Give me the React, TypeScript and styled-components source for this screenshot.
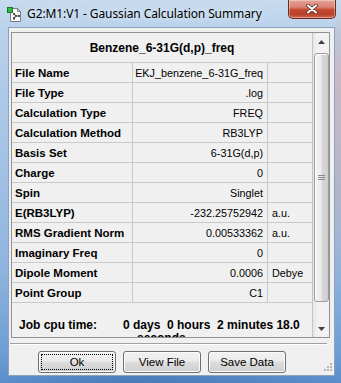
import React from "react";
import styled, { createGlobalStyle } from "styled-components";

const GlobalStyle = createGlobalStyle`
  html, body { margin: 0; padding: 0; }
  body { width: 341px; height: 383px; overflow: hidden; background: #9dbde2; }
  * { box-sizing: border-box; }
`;

const Window = styled.div`
  width: 341px;
  height: 383px;
  display: flex;
  flex-direction: column;
  padding: 0 6px 7px 8px;
  background:
    linear-gradient(180deg, rgba(205,180,185,0) 0%, rgba(205,180,185,0.75) 20%, rgba(190,175,185,0.6) 50%, rgba(190,175,185,0) 75%) right top / 6px 100% no-repeat,
    linear-gradient(90deg, rgba(40,90,160,0) 0%, rgba(40,90,160,0.35) 40%, rgba(40,90,160,0) 100%) left bottom / 100% 7px no-repeat,
    linear-gradient(180deg, #c7dbef 0%, #b9d1eb 8%, #a5c3e5 40%, #8fb4df 70%, #6e9ed4 92%, #5a8dca 100%);
`;

const TitleBar = styled.div`
  height: 27px;
  display: flex;
  align-items: flex-start;
`;

const AppIcon = styled.svg`
  margin: 7px 0 0 -1px;
  flex: none;
`;

const TitleText = styled.div`
  margin-left: 4px;
  line-height: 27px;
  font-family: "Noto Sans", "Liberation Sans", sans-serif;
  font-size: 12px;
  color: #000;
  letter-spacing: -0.1px;
  text-shadow: 0 0 6px rgba(255,255,255,0.9);
`;

const CloseButton = styled.div`
  margin-left: auto;
  margin-right: -1px;
  width: 48px;
  height: 19px;
  border: 1px solid #6e2a20;
  border-top: none;
  border-radius: 0 0 5px 5px;
  background: linear-gradient(180deg, #e6a396 0%, #d98270 40%, #c4472f 55%, #b8402c 80%, #cf6a4e 100%);
  box-shadow: inset 0 0 0 1px rgba(255,255,255,0.35);
  display: flex;
  align-items: center;
  justify-content: center;
`;

const Client = styled.div`
  flex: 1;
  background: #f0f0f0;
  border: 1px solid #8ea3bb;
  display: flex;
  flex-direction: column;
  min-height: 0;
`;

const Panel = styled.div`
  margin: 4px 4px 0 2px;
  height: 306px;
  border: 1px solid #8e9196;
  display: flex;
  overflow: hidden;
`;

const Content = styled.div`
  width: 300px;
  flex: none;
  overflow: hidden;
  font-family: "Liberation Sans", Arial, sans-serif;
  color: #000;
`;

const Header = styled.div`
  height: 30px;
  border-bottom: 1px solid #c9c9c9;
  display: flex;
  align-items: center;
  justify-content: center;
  font-weight: bold;
  font-size: 12px;
  padding-top: 1px;
`;

const Grid = styled.div`
  display: grid;
  grid-template-columns: 121px 135px 44px;
  grid-auto-rows: 20px;
`;

const Cell = styled.div<{ $kind: "label" | "value" | "unit" }>`
  display: flex;
  align-items: center;
  border-bottom: 1px solid #c9c9c9;
  border-right: ${(p) => (p.$kind === "unit" ? "none" : "1px solid #c9c9c9")};
  white-space: nowrap;
  overflow: hidden;
  font-size: ${(p) => (p.$kind === "label" ? "11.5px" : "10.8px")};
  font-weight: ${(p) => (p.$kind === "label" ? "bold" : "normal")};
  justify-content: ${(p) => (p.$kind === "value" ? "flex-end" : "flex-start")};
  padding: ${(p) => (p.$kind === "label" ? "0 0 0 3px" : p.$kind === "value" ? "0 4px 0 0" : "0 0 0 4px")};
`;

const JobRow = styled.div`
  display: grid;
  grid-template-columns: 104px 1fr;
  padding: 15px 0 0 7px;
  font-size: 12px;
  font-weight: bold;
  line-height: 14px;
`;

const JobValue = styled.div`
  white-space: pre;
`;

const JobWrap = styled.div`
  padding-left: 14px;
  margin-top: -1px;
`;

const ScrollBar = styled.div`
  width: 17px;
  flex: none;
  border-left: 1px solid #c4c4c4;
  background: linear-gradient(90deg, #e6e6e6 0%, #f2f2f2 30%, #f2f2f2 100%);
  display: flex;
  flex-direction: column;
  align-items: center;
`;

const ArrowButton = styled.div`
  height: 17px;
  width: 16px;
  display: flex;
  align-items: center;
  justify-content: center;
  flex: none;
`;

const Thumb = styled.div`
  width: 15px;
  margin-top: 3px;
  height: 249px;
  border: 1px solid #9c9c9c;
  border-radius: 3px;
  background: linear-gradient(90deg, #f4f4f4 0%, #ececec 45%, #d8d8d8 55%, #cdcdcd 100%);
  box-shadow: inset 1px 1px 0 #ffffff;
  display: flex;
  align-items: center;
  justify-content: center;
`;

const TrackGap = styled.div`
  flex: 1;
`;

const Separator = styled.div`
  margin: 5px 7px 0 1px;
  height: 2px;
  border-top: 1px solid #a0a0a0;
  border-bottom: 1px solid #ffffff;
`;

const ButtonRow = styled.div`
  margin-top: 6px;
  padding-left: 29px;
  display: flex;
  gap: 7px;
  flex: 1;
`;

const Button = styled.button<{ $focused?: boolean }>`
  width: 78px;
  height: 22px;
  padding: 0;
  border: 1px solid #707070;
  border-radius: 3px;
  background: linear-gradient(180deg, #f2f2f2 0%, #ebebeb 45%, #dddddd 50%, #cfcfcf 100%);
  box-shadow: inset 0 0 0 1px #fbfbfb;
  font-family: "Liberation Sans", Arial, sans-serif;
  font-size: 11.5px;
  color: #000;
  position: relative;
  outline: ${(p) => (p.$focused ? "1px dotted #000" : "none")};
  outline-offset: -4px;
`;

const Grip = styled.svg`
  margin-left: auto;
  margin-right: 2px;
  align-self: flex-end;
  margin-bottom: 4px;
`;

const rows: [string, string, string][] = [
  ["File Name", "EKJ_benzene_6-31G_freq", ""],
  ["File Type", ".log", ""],
  ["Calculation Type", "FREQ", ""],
  ["Calculation Method", "RB3LYP", ""],
  ["Basis Set", "6-31G(d,p)", ""],
  ["Charge", "0", ""],
  ["Spin", "Singlet", ""],
  ["E(RB3LYP)", "-232.25752942", "a.u."],
  ["RMS Gradient Norm", "0.00533362", "a.u."],
  ["Imaginary Freq", "0", ""],
  ["Dipole Moment", "0.0006", "Debye"],
  ["Point Group", "C1", ""],
];

export default function App() {
  return (
    <>
      <GlobalStyle />
      <Window>
        <TitleBar>
          <AppIcon width="16" height="16" viewBox="0 0 16 16">
            <path d="M3.5 1.5h7l3 3v10h-10z" fill="#fff" stroke="#7d7d7d" />
            <path d="M10.5 1.5v3h3" fill="none" stroke="#7d7d7d" />
            <rect x="0.5" y="0.5" width="5" height="5" fill="#33b84a" stroke="#1d7a2c" />
            <path d="M7 7l2 2M9 9l-2 2M9 9h3M7 11v2" stroke="#666" strokeWidth="1.2" fill="none" />
            <rect x="6" y="6" width="2" height="2" fill="#555" />
            <rect x="8" y="8" width="2" height="2" fill="#555" />
            <rect x="6" y="10" width="2" height="2" fill="#555" />
            <rect x="11" y="8" width="2" height="2" fill="#555" />
          </AppIcon>
          <TitleText>G2:M1:V1 - Gaussian Calculation Summary</TitleText>
          <CloseButton>
            <svg width="12" height="10" viewBox="0 0 12 10">
              <path d="M2 1.5l8 7M10 1.5l-8 7" stroke="#5a2a22" strokeWidth="3.6" strokeLinecap="round" />
              <path d="M2 1.5l8 7M10 1.5l-8 7" stroke="#ffffff" strokeWidth="2" strokeLinecap="round" />
            </svg>
          </CloseButton>
        </TitleBar>
        <Client>
          <Panel>
            <Content>
              <Header>Benzene_6-31G(d,p)_freq</Header>
              <Grid>
                {rows.map(([label, value, unit]) => (
                  <React.Fragment key={label}>
                    <Cell $kind="label">{label}</Cell>
                    <Cell $kind="value">{value}</Cell>
                    <Cell $kind="unit">{unit}</Cell>
                  </React.Fragment>
                ))}
              </Grid>
              <JobRow>
                <div>Job cpu time:</div>
                <JobValue>
                  {"0 days  0 hours  2 minutes 18.0"}
                  <JobWrap>seconds</JobWrap>
                </JobValue>
              </JobRow>
            </Content>
            <ScrollBar>
              <ArrowButton>
                <svg width="7" height="4" viewBox="0 0 7 4">
                  <path d="M0 4L3.5 0L7 4z" fill="#404040" />
                </svg>
              </ArrowButton>
              <Thumb>
                <svg width="7" height="6" viewBox="0 0 7 6">
                  <path d="M0 0.5h7M0 2.5h7M0 4.5h7" stroke="#8a8a8a" strokeWidth="1" />
                </svg>
              </Thumb>
              <TrackGap />
              <ArrowButton>
                <svg width="7" height="4" viewBox="0 0 7 4">
                  <path d="M0 0L3.5 4L7 0z" fill="#404040" />
                </svg>
              </ArrowButton>
            </ScrollBar>
          </Panel>
          <Separator />
          <ButtonRow>
            <Button $focused>Ok</Button>
            <Button>View File</Button>
            <Button>Save Data</Button>
            <Grip width="9" height="9" viewBox="0 0 9 9">
              <g fill="#b8b8b8">
                <rect x="7" y="1" width="2" height="2" />
                <rect x="4" y="4" width="2" height="2" />
                <rect x="7" y="4" width="2" height="2" />
                <rect x="1" y="7" width="2" height="2" />
                <rect x="4" y="7" width="2" height="2" />
                <rect x="7" y="7" width="2" height="2" />
              </g>
            </Grip>
          </ButtonRow>
        </Client>
      </Window>
    </>
  );
}
